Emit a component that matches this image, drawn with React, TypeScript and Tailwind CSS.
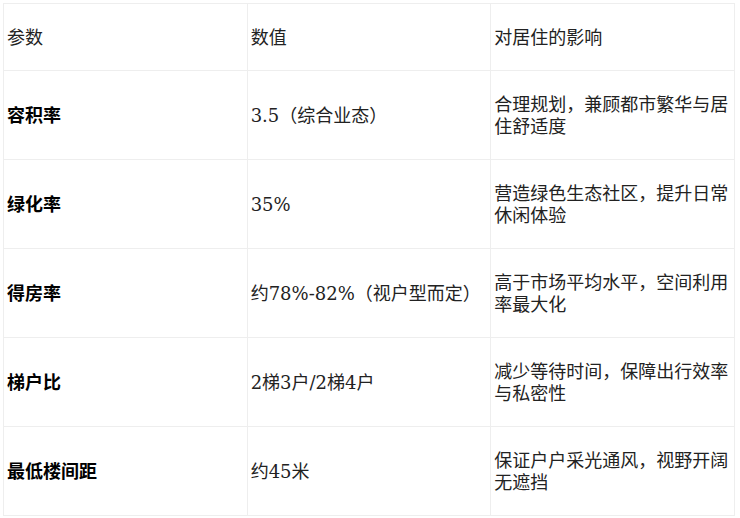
import React from "react";

interface Row {
  name: string;
  value: string;
  effect: string;
}

const ROWS: Row[] = [
  { name: "容积率", value: "3.5（综合业态）", effect: "合理规划，兼顾都市繁华与居住舒适度" },
  { name: "绿化率", value: "35%", effect: "营造绿色生态社区，提升日常休闲体验" },
  { name: "得房率", value: "约78%-82%（视户型而定）", effect: "高于市场平均水平，空间利用率最大化" },
  { name: "梯户比", value: "2梯3户/2梯4户", effect: "减少等待时间，保障出行效率与私密性" },
  { name: "最低楼间距", value: "约45米", effect: "保证户户采光通风，视野开阔无遮挡" },
];

const cell = "border border-[#eeeeee] pl-[3px] pr-1 pt-[23px] pb-[21px] align-middle text-left";

const App: React.FC = () => {
  return (
    <div className="w-[740px] h-[518px] bg-white p-[3px]">
      <table className="w-[732px] table-fixed border-collapse text-[18px] leading-[22px] text-[#222222] font-['DejaVu_Sans','Noto_Sans_CJK_SC',sans-serif]">
        <thead>
          <tr>
            <th className={`${cell} font-normal`}>参数</th>
            <th className={`${cell} font-normal`}>数值</th>
            <th className={`${cell} font-normal`}>对居住的影响</th>
          </tr>
        </thead>
        <tbody>
          {ROWS.map((r) => (
            <tr key={r.name}>
              <td className={`${cell} font-bold text-black`}>{r.name}</td>
              <td className={`${cell} font-['DejaVu_Serif','Noto_Sans_CJK_SC',serif]`}>
                {r.value}
              </td>
              <td className={cell}>{r.effect}</td>
            </tr>
          ))}
        </tbody>
      </table>
    </div>
  );
};

export default App;
